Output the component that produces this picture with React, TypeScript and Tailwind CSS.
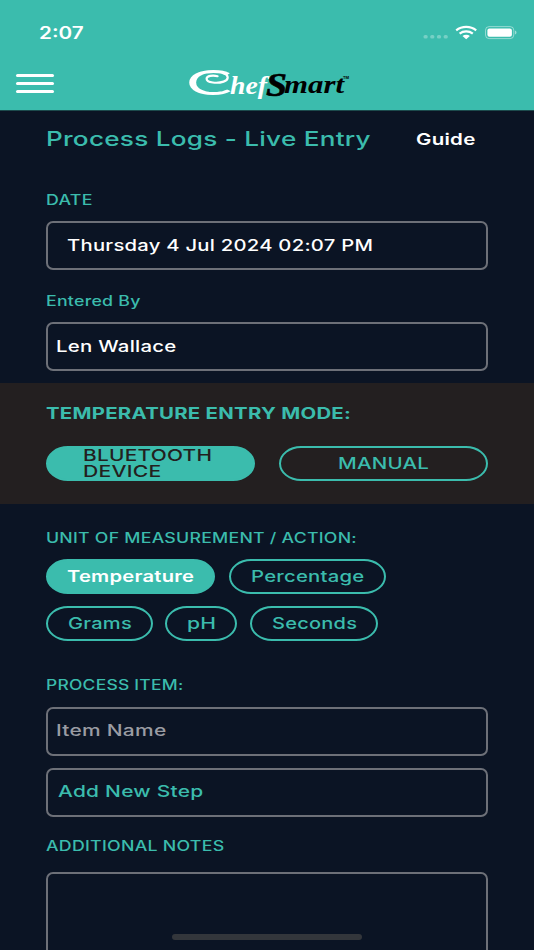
import { useLayoutEffect, useRef, useState } from "react";
import type { ReactNode } from "react";
import clsx from "clsx";

// Sets a line of wide lettering to an exact width
function WideText({ width, className, children }: { width: number; className?: string; children: ReactNode }) {
    const ref = useRef<HTMLSpanElement>(null);
    const [scale, setScale] = useState(1.2);

    useLayoutEffect(() => {
        if (ref.current) {
            setScale(width / ref.current.offsetWidth);
        }
    }, [width]);

    return (
        <span className={clsx("block shrink-0 text-left", className)} style={{ width }}>
            <span
                ref={ref}
                className="inline-block origin-left whitespace-nowrap align-top"
                style={{ transform: `scaleX(${scale})` }}
            >
                {children}
            </span>
        </span>
    );
}

function Label({ width, children }: { width: number; children: ReactNode }) {
    return (
        <WideText width={width} className="h-5 text-sm font-medium leading-5 tracking-[0.2px] text-[#3bbcad]">
            {children}
        </WideText>
    );
}

function Field({ className, children }: { className?: string; children?: ReactNode }) {
    return (
        <div
            className={clsx(
                "flex h-[49px] w-[442px] items-center rounded-[7px] border-2 border-[#6d7078] pb-[2px] text-base font-medium tracking-[0.2px]",
                className
            )}
        >
            {children}
        </div>
    );
}

function Pill({ active, className, children }: { active?: boolean; className: string; children: ReactNode }) {
    return (
        <button
            className={clsx(
                "flex h-[35px] shrink-0 items-center justify-center rounded-[22px/17.5px] border-2 border-[#3bbcad] pb-[2px] text-base font-medium leading-4 tracking-[0.2px]",
                active ? "bg-[#3bbcad]" : "text-[#3bbcad]",
                className
            )}
        >
            {children}
        </button>
    );
}

function Logo() {
    return (
        <svg width="164" height="36" viewBox="0 0 164 36" className="overflow-visible" aria-label="ChefSmart">
            <g fontFamily="'Liberation Serif', serif" fontStyle="italic" fontWeight="700">
                <text x="-1" y="27" fontFamily="Lato, sans-serif" fontStyle="normal" fontWeight="400" fontSize="34" fill="#fff" textLength="46" lengthAdjust="spacingAndGlyphs">C</text>
                <text x="43" y="26" fontSize="25" fill="#fff" textLength="37" lengthAdjust="spacingAndGlyphs">hef</text>
                <text x="79" y="28" fontSize="33" fill="#000" stroke="#000" strokeWidth="0.6" textLength="21" lengthAdjust="spacingAndGlyphs">S</text>
                <text x="97" y="25" fontSize="25" fill="#000" textLength="60" lengthAdjust="spacingAndGlyphs">mart</text>
            </g>
            {/* Curl inside the first letter */}
            <path
                d="M37 5.2c5 2.4 5 6.6-.4 8.4-6 2-17 1.400-17-2.800 0-3 6-4 11-2.600"
                fill="none"
                stroke="#fff"
                strokeWidth="2.2"
                strokeLinecap="round"
            />
            <text x="156" y="11" fontFamily="Inter, sans-serif" fontSize="4" fontWeight="700" fill="#000" textLength="6" lengthAdjust="spacingAndGlyphs">TM</text>
        </svg>
    );
}

function StatusIcons() {
    return (
        <svg width="94" height="16" viewBox="0 0 94 16">
            <g fill="#fff" fillOpacity="0.3">
                <rect x="0.5" y="10" width="4.2" height="3.6" rx="1.6" />
                <rect x="7.2" y="10" width="4.2" height="3.6" rx="1.6" />
                <rect x="13.9" y="10" width="4.2" height="3.6" rx="1.6" />
                <rect x="20.6" y="10" width="4.2" height="3.6" rx="1.6" />
            </g>
            <g fill="none" stroke="#fff" strokeWidth="2.2">
                <path d="M33.2 5.3C39 .7 47.4.7 53.2 5.3" />
                <path d="M36.6 8.7c3.8-3 9.4-3 13.2 0" />
            </g>
            <path d="M39.5 11c2-1.6 5.4-1.6 7.4 0l-3.7 3.2z" fill="#fff" />
            <rect x="62.5" y="1.600" width="28.3" height="12" rx="3.6" fill="none" stroke="#fff" strokeOpacity="0.45" />
            <rect x="64.4" y="3.500" width="24.5" height="8.3" rx="2" fill="#fff" />
            <path d="M92 5.6c2 .8 2 3.2 0 4z" fill="#fff" fillOpacity="0.5" />
        </svg>
    );
}

export default function App() {
    return (
        <div className="relative h-[950px] w-[534px] overflow-hidden bg-[#0b1424] font-['Inter',sans-serif]">
            {/* Header */}
            <header className="h-[111px] border-b border-[#1c4a4c] bg-[#3bbcad]">
                <div className="flex h-16 items-center justify-between pl-[39px] pr-[17px] pt-px">
                    <WideText width={45} className="text-[17px] font-semibold leading-6 text-white">2:07</WideText>
                    <StatusIcons />
                </div>
                <div className="flex h-[46px] items-start pl-4">
                    <div className="mt-[10px] flex w-[38px] flex-col gap-[5px]">
                        <span className="h-[3px] rounded-full bg-white" />
                        <span className="h-[3px] rounded-full bg-white" />
                        <span className="h-[3px] rounded-full bg-white" />
                    </div>
                    <div className="ml-[133px] mt-[4px]">
                        <Logo />
                    </div>
                </div>
            </header>

            <main>
                <section className="px-[46px]">
                    <div className="flex h-[79px] items-start pt-[14px]">
                        <WideText width={325} className="text-xl font-medium leading-7 tracking-[0.2px] text-[#3bbcad]">
                            Process Logs - Live Entry
                        </WideText>
                        <WideText width={59} className="ml-[45px] text-base font-semibold leading-7 tracking-[0.2px] text-white">
                            Guide
                        </WideText>
                    </div>

                    <Label width={47}>DATE</Label>
                    <Field className="mt-[11px] pl-[19px] text-white">
                        <WideText width={306}>Thursday 4 Jul 2024 02:07 PM</WideText>
                    </Field>
                    <div className="mt-[21px]">
                        <Label width={95}>Entered By</Label>
                    </div>
                    <Field className="mt-[11px] pl-2 text-white">
                        <WideText width={121}>Len Wallace</WideText>
                    </Field>
                </section>

                {/* Temperature entry mode */}
                <section className="mt-3 h-[121px] bg-[#231f20] px-[46px] pt-5">
                    <WideText width={305} className="text-[15.5px] font-bold leading-[22px] tracking-[0.2px] text-[#3bbcad]">
                        TEMPERATURE ENTRY MODE:
                    </WideText>
                    <div className="mt-[21px] flex gap-6">
                        <Pill active className="w-[209px] text-[#231f20]">
                            <span className="flex w-[135px] flex-col">
                                <WideText width={129}>BLUETOOTH</WideText>
                                <WideText width={78}>DEVICE</WideText>
                            </span>
                        </Pill>
                        <Pill className="w-[209px]">
                            <WideText width={91}>MANUAL</WideText>
                        </Pill>
                    </div>
                </section>

                <section className="px-[46px] pt-6">
                    <Label width={311}>UNIT OF MEASUREMENT / ACTION:</Label>
                    <div className="mt-[11px] flex gap-[14px]">
                        <Pill active className="w-[169px] text-white">
                            <WideText width={127} className="font-semibold">Temperature</WideText>
                        </Pill>
                        <Pill className="w-[157px]">
                            <WideText width={114}>Percentage</WideText>
                        </Pill>
                    </div>
                    <div className="mt-3 flex">
                        <Pill className="w-[107px]">
                            <WideText width={64}>Grams</WideText>
                        </Pill>
                        <Pill className="ml-3 w-[72px]">
                            <WideText width={29}>pH</WideText>
                        </Pill>
                        <Pill className="ml-[13px] w-[128px]">
                            <WideText width={85}>Seconds</WideText>
                        </Pill>
                    </div>

                    <div className="mt-[34px]">
                        <Label width={137}>PROCESS ITEM:</Label>
                    </div>
                    <Field className="mt-[11.5px] pl-2 text-[#9a9ca3]">
                        <WideText width={110}>Item Name</WideText>
                    </Field>
                    <Field className="mt-3 pl-[10px] text-[#3bbcad]">
                        <WideText width={145}>Add New Step</WideText>
                    </Field>
                    <div className="mt-[19.5px]">
                        <Label width={179}>ADDITIONAL NOTES</Label>
                    </div>
                    <div className="mt-4 h-[120px] w-[442px] rounded-[7px] border-2 border-[#6d7078]" />
                </section>
            </main>

            {/* Home indicator */}
            <div className="absolute left-[172px] top-[934px] h-[6px] w-[190px] rounded-full bg-[#33363b]" />
        </div>
    );
}
